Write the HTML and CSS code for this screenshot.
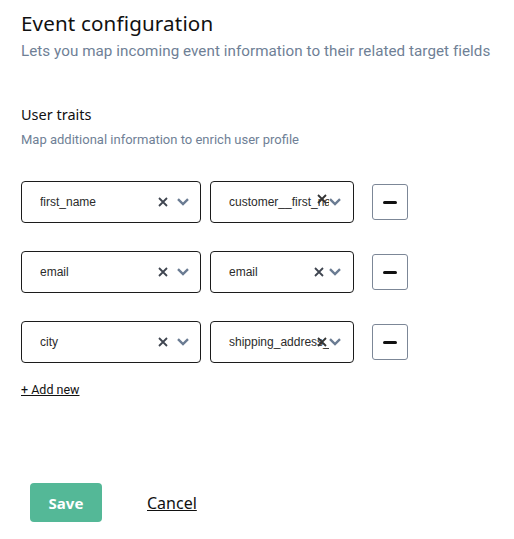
FILE: index.html
```html
<!DOCTYPE html>
<html>
<head>
<meta charset="utf-8">
<link rel="stylesheet" href="styles.css">
</head>
<body>
<div class="page">
  <header class="header">
    <h1 class="title">Event configuration</h1>
    <p class="subtitle">Lets you map incoming event information to their related target fields</p>
  </header>

  <section class="section">
    <h2 class="section-title">User traits</h2>
    <p class="section-desc">Map additional information to enrich user profile</p>

    <div class="rows">
      <div class="row">
        <div class="select wide">
          <span class="value">first_name</span>
          <span class="indicators">
            <svg class="clear" viewBox="0 0 10 10"><path d="M1 1L9 9M9 1L1 9"/></svg>
            <svg class="chev" viewBox="0 0 12 8"><path d="M1 1.2L6 6L11 1.2"/></svg>
          </span>
        </div>
        <div class="select narrow">
          <span class="value">customer__first_name</span>
          <svg class="clear over raised" viewBox="0 0 10 10"><path d="M1 1L9 9M9 1L1 9"/></svg>
          <svg class="chev end" viewBox="0 0 12 8"><path d="M1 1.2L6 6L11 1.2"/></svg>
        </div>
        <button class="remove" type="button"><span class="bar"></span></button>
      </div>

      <div class="row">
        <div class="select wide">
          <span class="value">email</span>
          <span class="indicators">
            <svg class="clear" viewBox="0 0 10 10"><path d="M1 1L9 9M9 1L1 9"/></svg>
            <svg class="chev" viewBox="0 0 12 8"><path d="M1 1.2L6 6L11 1.2"/></svg>
          </span>
        </div>
        <div class="select narrow">
          <span class="value">email</span>
          <span class="indicators compact">
            <svg class="clear" viewBox="0 0 10 10"><path d="M1 1L9 9M9 1L1 9"/></svg>
            <svg class="chev" viewBox="0 0 12 8"><path d="M1 1.2L6 6L11 1.2"/></svg>
          </span>
        </div>
        <button class="remove" type="button"><span class="bar"></span></button>
      </div>

      <div class="row">
        <div class="select wide">
          <span class="value">city</span>
          <span class="indicators">
            <svg class="clear" viewBox="0 0 10 10"><path d="M1 1L9 9M9 1L1 9"/></svg>
            <svg class="chev" viewBox="0 0 12 8"><path d="M1 1.2L6 6L11 1.2"/></svg>
          </span>
        </div>
        <div class="select narrow">
          <span class="value">shipping_address_city</span>
          <svg class="clear over" viewBox="0 0 10 10"><path d="M1 1L9 9M9 1L1 9"/></svg>
          <svg class="chev end" viewBox="0 0 12 8"><path d="M1 1.2L6 6L11 1.2"/></svg>
        </div>
        <button class="remove" type="button"><span class="bar"></span></button>
      </div>
    </div>

    <a class="add-new" href="#">+ Add new</a>
  </section>

  <footer class="actions">
    <button class="save" type="button">Save</button>
    <a class="cancel" href="#">Cancel</a>
  </footer>
</div>
</body>
</html>
```

FILE: styles.css
```css
* { box-sizing: border-box; }
html, body { margin: 0; padding: 0; background: #fff; }
body { font-family: "Noto Sans", "Open Sans", sans-serif; color: #111; }

.page {
  width: 514px;
  height: 539px;
  padding: 9px 21px 0 21px;
}

.title {
  margin: 0;
  font-family: "Noto Sans", sans-serif;
  font-weight: 400;
  font-size: 20.6px;
  line-height: 28px;
  color: #111;
  letter-spacing: 0.15px;
}

.subtitle {
  margin: 3px 0 0 0;
  font-family: Roboto, sans-serif;
  font-size: 15.2px;
  line-height: 22px;
  color: #6f7f96;
  letter-spacing: 0.05px;
}

.section { margin-top: 41px; }

.section-title {
  margin: 0;
  font-family: "Noto Sans", sans-serif;
  font-weight: 400;
  font-size: 14.5px;
  line-height: 22px;
  color: #111;
}

.section-desc {
  margin: 6px 0 0 0;
  font-family: Roboto, sans-serif;
  font-size: 13px;
  line-height: 18px;
  color: #6f7f96;
}

.rows {
  margin-top: 32px;
  display: flex;
  flex-direction: column;
  gap: 28px;
}

.row {
  display: flex;
  align-items: center;
}

.select {
  position: relative;
  height: 42px;
  border: 1px solid #1c1c1c;
  border-radius: 4px;
  display: flex;
  align-items: center;
  padding-left: 18px;
  font-family: "Liberation Sans", Arial, sans-serif;
  font-size: 12px;
  color: #2b2b2b;
  overflow: hidden;
}

.select.wide { width: 180px; margin-right: 9px; }
.select.narrow { width: 144px; margin-right: 18px; }

.value {
  white-space: nowrap;
  flex: 1;
  min-width: 0;
  overflow: hidden;
}

.indicators {
  display: flex;
  align-items: center;
  gap: 9px;
  padding-right: 11px;
  padding-left: 6px;
}

.indicators.compact { gap: 5px; padding-right: 12px; }

.clear {
  width: 10px;
  height: 10px;
  stroke: #3f4550;
  stroke-width: 1.8;
  fill: none;
  flex: none;
}

.clear.over {
  position: absolute;
  right: 26px;
  top: 15px;
  stroke: #333;
}

.clear.over.raised { top: 12px; }

.chev {
  width: 12px;
  height: 8px;
  stroke: #6b7c93;
  stroke-width: 2.4;
  fill: none;
  flex: none;
}

.chev.end { margin-right: 12px; }

.remove {
  width: 36px;
  height: 36px;
  border: 1px solid #7c8797;
  border-radius: 3px;
  background: #fff;
  display: flex;
  align-items: center;
  justify-content: center;
  padding: 0;
}

.bar {
  display: block;
  width: 14px;
  height: 3px;
  border-radius: 1.5px;
  background: #111;
}

.add-new {
  display: inline-block;
  margin-top: 19px;
  font-family: Roboto, sans-serif;
  font-size: 12.5px;
  line-height: 16px;
  color: #111;
  text-decoration: underline;
}

.actions {
  margin-top: 84px;
  padding-left: 9px;
  display: flex;
  align-items: center;
  gap: 45px;
}

.save {
  width: 72px;
  height: 39px;
  border: none;
  border-radius: 4px;
  background: #54b897;
  color: #fff;
  font-family: "Noto Sans", sans-serif;
  font-weight: 700;
  font-size: 15px;
}

.cancel {
  font-family: "Noto Sans", sans-serif;
  font-size: 16px;
  color: #111;
  text-decoration: underline;
}
```
